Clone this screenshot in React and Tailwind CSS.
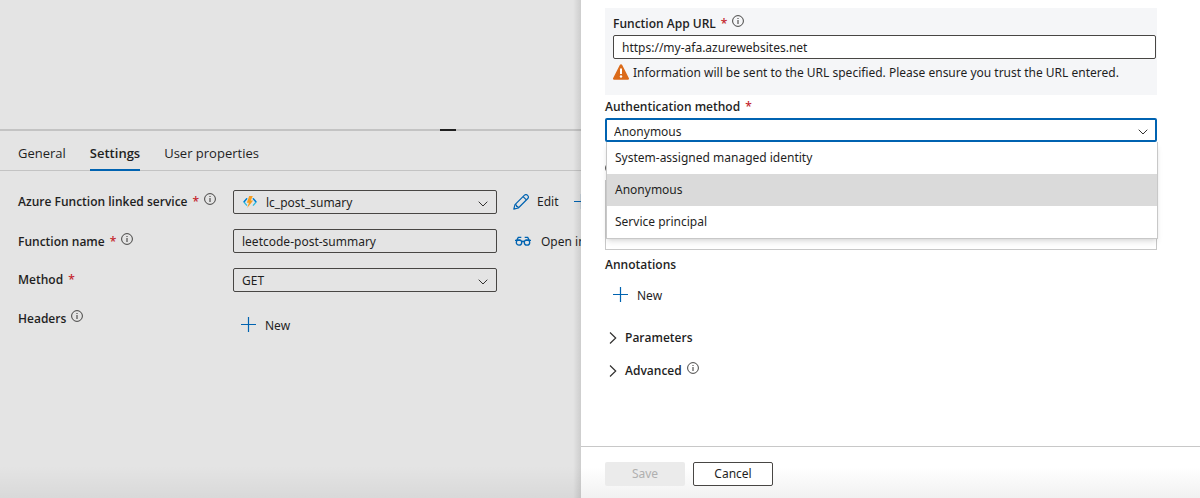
import React, { useState } from "react";

function InfoIcon() {
  return (
    <svg className="size-3 shrink-0" viewBox="0 0 12 12" fill="none" aria-hidden="true">
      <circle cx="6" cy="6" r="5.4" stroke="#323130" strokeWidth="0.9" />
      <path d="M6 5v4" stroke="#323130" strokeWidth="1" />
      <path d="M6 3v1" stroke="#323130" strokeWidth="1" />
    </svg>
  );
}

function ChevronDown() {
  return (
    <svg
      className="pointer-events-none col-start-1 row-start-1 mr-2 mt-1 h-2 w-3 self-center justify-self-end"
      viewBox="0 0 12 8"
      fill="none"
      aria-hidden="true"
    >
      <path d="M1.7 1.7 6 6l4.3-4.3" stroke="#323130" strokeWidth="1" />
    </svg>
  );
}

function ChevronRight() {
  return (
    <svg className="h-3 w-2 shrink-0" viewBox="0 0 8 12" fill="none" aria-hidden="true">
      <path d="M1 0.5 6.7 6 1 11.5" stroke="#323130" strokeWidth="1.2" />
    </svg>
  );
}

function PlusIcon() {
  return (
    <svg className="size-4 shrink-0" viewBox="0 0 16 16" fill="none" aria-hidden="true">
      <path d="M7.5 0v15M0 7.5h15" stroke="#0063b1" strokeWidth="1.2" />
    </svg>
  );
}

function PencilIcon() {
  return (
    <svg className="size-4 shrink-0" viewBox="0 0 16 16" fill="none" stroke="#0063b1" strokeWidth="1.2" aria-hidden="true">
      <path d="M0.8 15.2 2 10.7 11.5 1.2a2 2 0 0 1 2.9 0l0.4 0.4a2 2 0 0 1 0 2.9L5.3 14Z" strokeLinejoin="round" />
      <path d="M2 10.7c1.3 0 1.8.5 1.7 1.6 1.1 0 1.6.5 1.6 1.7M10.1 2.6l3.3 3.3" />
    </svg>
  );
}

function GlassesIcon() {
  return (
    <svg className="size-4 shrink-0" viewBox="0 0 16 16" fill="none" stroke="#0063b1" strokeWidth="1.3" aria-hidden="true">
      <circle cx="4" cy="9.5" r="2.7" />
      <circle cx="12" cy="9.5" r="2.7" />
      <path d="M0 7.3h5.5M10.5 7.3H16M6.5 9c.8-.8 2.2-.8 3 0M1.6 7.3 3.3 4.4h3M14.4 7.3 12.7 4.4h-3" />
    </svg>
  );
}

function FunctionIcon() {
  return (
    <svg className="col-start-1 row-start-1 ml-2.5 h-3 w-3.5 self-center" viewBox="0 0 14 12" fill="none" aria-hidden="true">
      <path d="M4 2.3 0.9 6 4 9.7" stroke="#32bedd" strokeWidth="1.3" />
      <path d="M4 2.3 0.9 6" stroke="#0078d4" strokeWidth="1.3" />
      <path d="M10 2.3 13.1 6 10 9.7" stroke="#32bedd" strokeWidth="1.3" />
      <path d="M10 2.3 13.1 6" stroke="#0078d4" strokeWidth="1.3" />
      <path d="M6.2 0h3.6L7.8 4.5h2.4L4.2 12l1.7-5.2H3.8Z" fill="#f59d1e" />
    </svg>
  );
}

function WarningIcon() {
  return (
    <svg className="mb-0.5 size-4 shrink-0" viewBox="0 0 16 16" aria-hidden="true">
      <path d="M8 0.2c.6 0 .9.3 1.2.8l6.6 13c.5 1 .1 1.8-1 1.8H1.2c-1.1 0-1.5-.8-1-1.8l6.6-13c.3-.5.6-.8 1.2-.8Z" fill="#db6b1b" />
      <path d="M8 4.5v5.5" stroke="#fff" strokeWidth="2" />
      <circle cx="8" cy="12.5" r="1.2" fill="#fff" />
    </svg>
  );
}

function Required() {
  return <span className="text-[#c4262e]">*</span>;
}

function FieldLabel({ htmlFor, children, required, info }) {
  return (
    <div className="flex items-center gap-[5px] font-['Open_Sans',sans-serif] font-semibold">
      <label htmlFor={htmlFor}>{children}</label>
      {required && <Required />}
      {info && (
        <span className="mb-1.5">
          <InfoIcon />
        </span>
      )}
    </div>
  );
}

const fieldClass = "h-6 w-full appearance-none rounded-xs border border-[#484644] bg-transparent px-2 outline-none";

function NewButton() {
  return (
    <button type="button" className="flex h-6 items-center gap-2 pt-0.5">
      <span className="mb-0.5">
        <PlusIcon />
      </span>
      New
    </button>
  );
}

function ActivityPane() {
  return (
    <main className="relative min-w-0 flex-1 overflow-hidden bg-[#e4e4e4]">
      <div className="h-[129px]" />
      <div className="h-0.5 bg-[#c3c3c3] pl-[440px]">
        <div className="h-full w-4 bg-[#1f1f1f]" />
      </div>
      <nav className="flex h-10 gap-6 border-b border-[#c3c3c3] pl-[18px] font-['Open_Sans',sans-serif] text-[13px]">
        <a href="#general" className="flex h-10 items-center pb-px pt-1">General</a>
        <a
          href="#settings"
          aria-current="page"
          className="flex h-10 items-center border-b-2 border-[#0063b1] pt-1.5 font-semibold"
        >
          Settings
        </a>
        <a href="#user-properties" className="flex h-10 items-center pb-px pt-1">User properties</a>
      </nav>
      <form className="grid grid-cols-[215px_264px_max-content] items-center gap-y-[15px] pl-[18px] pt-[19px]">
        <FieldLabel htmlFor="linked-service" required info>Azure Function linked service</FieldLabel>
        <div className="grid">
          <select id="linked-service" className={`${fieldClass} col-start-1 row-start-1 pl-8 pt-0.5`}>
            <option>lc_post_sumary</option>
          </select>
          <FunctionIcon />
          <ChevronDown />
        </div>
        <div className="flex gap-4 pl-4">
          <button type="button" className="flex items-center gap-2">
            <PencilIcon />
            Edit
          </button>
          <button type="button" aria-label="New linked service" className="flex items-center">
            <PlusIcon />
          </button>
        </div>

        <div className="pt-0.5">
          <FieldLabel htmlFor="function-name" required info>Function name</FieldLabel>
        </div>
        <input id="function-name" type="text" defaultValue="leetcode-post-summary" className={fieldClass} />
        <button type="button" className="flex items-center gap-2.5 pl-[18px] pt-0.5">
          <span className="mb-0.5">
            <GlassesIcon />
          </span>
          Open in new tab
        </button>

        <FieldLabel htmlFor="method" required>Method</FieldLabel>
        <div className="grid">
          <select id="method" className={`${fieldClass} col-start-1 row-start-1 pt-0.5`}>
            <option>GET</option>
            <option>POST</option>
          </select>
          <ChevronDown />
        </div>
        <span />

        <div className="self-start pt-0.5">
          <FieldLabel info>Headers</FieldLabel>
        </div>
        <div className="pl-2 pt-1.5">
          <NewButton />
        </div>
      </form>
      <div className="pointer-events-none absolute inset-y-0 right-0 w-2 bg-linear-to-r from-transparent to-black/10" />
      <div className="pointer-events-none absolute inset-x-0 bottom-0 h-8 bg-linear-to-b from-transparent to-black/5" />
    </main>
  );
}

const authMethods = ["System-assigned managed identity", "Anonymous", "Service principal"];

function LinkedServicePanel() {
  const [method, setMethod] = useState("Anonymous");
  return (
    <aside className="flex w-[619px] shrink-0 flex-col bg-white">
      <form className="flex flex-1 flex-col pl-6 pr-[43px] pt-2">
        <section className="h-[87px] bg-[#f5f6f8] pl-2 pr-px pt-1.5">
          <FieldLabel htmlFor="app-url" required info>Function App URL</FieldLabel>
          <input
            id="app-url"
            type="text"
            defaultValue="https://my-afa.azurewebsites.net"
            className="mt-px block h-6 w-full rounded-xs border border-[#484644] bg-white px-2 outline-none"
          />
          <p className="mt-1 flex items-center gap-1 whitespace-nowrap">
            <WarningIcon />
            Information will be sent to the URL specified. Please ensure you trust the URL entered.
          </p>
        </section>

        <div className="mt-0.5">
          <FieldLabel htmlFor="auth-method" required>Authentication method</FieldLabel>
        </div>
        <div className="relative mt-px grid">
          <select
            id="auth-method"
            value={method}
            onChange={(event) => setMethod(event.target.value)}
            className="col-start-1 row-start-1 h-6 w-full appearance-none rounded-xs border-2 border-[#0063b1] bg-white px-[7px] pt-0.5 outline-none"
          >
            {authMethods.map((name) => (
              <option key={name}>{name}</option>
            ))}
          </select>
          <ChevronDown />
          <ul
            role="listbox"
            aria-label="Authentication method"
            className="absolute top-full left-px z-10 w-full border-x border-b border-[#c8c8c8] bg-white shadow-md"
          >
            {authMethods.map((name) => (
              <li
                key={name}
                role="option"
                aria-selected={name === method}
                onClick={() => setMethod(name)}
                className="flex h-8 items-center px-2 aria-selected:bg-[#dadada]"
              >
                {name}
              </li>
            ))}
          </ul>
        </div>

        <div className="mt-[18px] flex h-4 items-center">
          <InfoIcon />
        </div>
        <textarea aria-label="Description" className="mt-1 h-[70px] w-full resize-none border border-[#c8c8c8] outline-none" />

        <h2 className="mt-[5px] font-['Open_Sans',sans-serif] font-semibold">Annotations</h2>
        <div className="mt-2 pl-2">
          <NewButton />
        </div>
        <button type="button" className="mt-[21px] flex items-center gap-2 pl-1 font-['Open_Sans',sans-serif] font-semibold">
          <ChevronRight />
          Parameters
        </button>
        <button type="button" className="mt-[13px] flex items-center gap-2 pl-1 font-['Open_Sans',sans-serif] font-semibold">
          <ChevronRight />
          <span className="flex items-center gap-[5px]">
            Advanced
            <span className="mb-1.5">
              <InfoIcon />
            </span>
          </span>
        </button>
      </form>
      <footer className="flex h-[52px] gap-2 border-t border-[#c8c8c8] bg-linear-to-b from-white from-40% to-[#f1f1f1] pl-6 pt-[15px]">
        <button type="button" disabled className="h-6 w-20 rounded-xs bg-[#ebebeb] text-[#b0b0b0]">Save</button>
        <button type="button" className="h-6 w-20 rounded-xs border border-[#484644] bg-white">Cancel</button>
      </footer>
    </aside>
  );
}

export default function App() {
  return (
    <div className="flex min-h-screen overflow-hidden font-['Noto_Sans','Open_Sans',sans-serif] text-xs leading-5 text-[#1f1f1f]">
      <ActivityPane />
      <LinkedServicePanel />
    </div>
  );
}
